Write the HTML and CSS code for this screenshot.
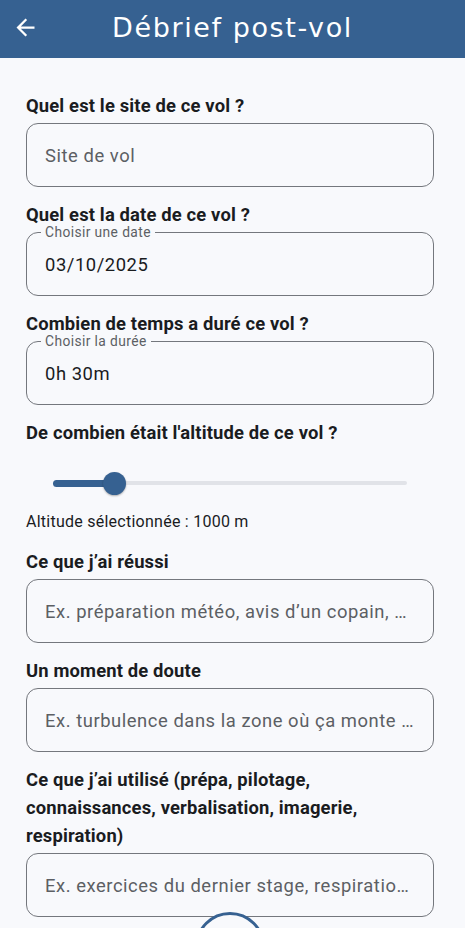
FILE: index.html
```html
<!DOCTYPE html>
<html lang="fr">
<head>
<meta charset="utf-8">
<title>Débrief post-vol</title>
<link rel="stylesheet" href="styles.css">
</head>
<body>
<header class="appbar">
  <button class="back" aria-label="Retour">
    <svg width="27" height="27" viewBox="0 0 24 24"><path d="M20 11H7.83l5.59-5.59L12 4l-8 8 8 8 1.41-1.41L7.83 13H20v-2z" fill="#fff"/></svg>
  </button>
  <h1 class="title">Débrief post-vol</h1>
</header>
<main class="form">
  <section class="group">
    <h2 class="label">Quel est le site de ce vol ?</h2>
    <div class="field"><span class="placeholder">Site de vol</span></div>
  </section>
  <section class="group">
    <h2 class="label">Quel est la date de ce vol ?</h2>
    <div class="field"><span class="float">Choisir une date</span><span class="value">03/10/2025</span></div>
  </section>
  <section class="group">
    <h2 class="label">Combien de temps a duré ce vol ?</h2>
    <div class="field"><span class="float">Choisir la durée</span><span class="value">0h 30m</span></div>
  </section>
  <section class="group">
    <h2 class="label">De combien était l'altitude de ce vol ?</h2>
    <div class="slider">
      <div class="track">
        <div class="active" style="width: 61px"></div>
        <div class="thumb"></div>
        <div class="inactive"></div>
      </div>
    </div>
    <p class="hint">Altitude sélectionnée : 1000 m</p>
  </section>
  <section class="group">
    <h2 class="label">Ce que j’ai réussi</h2>
    <div class="field"><span class="placeholder">Ex. préparation météo, avis d’un copain, …</span></div>
  </section>
  <section class="group">
    <h2 class="label">Un moment de doute</h2>
    <div class="field"><span class="placeholder">Ex. turbulence dans la zone où ça monte …</span></div>
  </section>
  <section class="group">
    <h2 class="label">Ce que j’ai utilisé (prépa, pilotage, connaissances, verbalisation, imagerie, respiration)</h2>
    <div class="field"><span class="placeholder">Ex. exercices du dernier stage, respiratio…</span></div>
  </section>
  <div class="fab" aria-hidden="true"></div>
</main>
</body>
</html>
```
FILE: styles.css
```css
* { box-sizing: border-box; }
html, body { margin: 0; padding: 0; }
body {
  background: #f8f9fc;
  font-family: Roboto, "Liberation Sans", sans-serif;
  color: #1a1c1f;
  width: 465px;
  height: 928px;
  overflow: hidden;
  position: relative;
}
.appbar {
  height: 58px;
  background: #366191;
  display: flex;
  align-items: center;
  position: relative;
}
.back {
  background: none;
  border: 0;
  padding: 0;
  margin-left: 12px;
  width: 27px;
  height: 27px;
  display: flex;
  align-items: center;
  justify-content: center;
  margin-top: -4px;
}
.title {
  flex: 1;
  margin: 0 0 3px 0;
  text-align: center;
  color: #fff;
  font-family: "DejaVu Sans", sans-serif;
  font-weight: 400;
  font-size: 27px;
  letter-spacing: 1.6px;
  padding-right: 39px;
}
.form {
  padding: 34px 31px 0 26px;
  display: flex;
  flex-direction: column;
  gap: 14px;
}
.group { display: flex; flex-direction: column; }
.label {
  margin: 0 0 3px 0;
  font-size: 18.4px;
  font-weight: 700;
  line-height: 28px;
  letter-spacing: 0.15px;
  color: #1a1c1f;
}
.field {
  position: relative;
  height: 64px;
  border: 1.3px solid #74777d;
  border-radius: 12px;
  display: flex;
  align-items: center;
  padding: 0 18px;
  font-size: 18.4px;
  letter-spacing: 0.55px;
}
.placeholder { color: #5c5f64; white-space: nowrap; }
.value { color: #1a1c1f; }
.float {
  position: absolute;
  top: -9px;
  left: 14px;
  padding: 0 4px;
  background: #f8f9fc;
  font-size: 13.8px;
  line-height: 16px;
  color: #5c5f64;
  letter-spacing: 0.4px;
}
.slider {
  height: 58px;
  margin-top: 4px;
  display: flex;
  align-items: center;
  padding: 0 27px;
}
.track {
  flex: 1;
  display: flex;
  align-items: center;
  height: 24px;
}
.active {
  height: 7px;
  background: #366191;
  border-radius: 4px 0 0 4px;
  margin-right: -11px;
}
.thumb {
  width: 23px;
  height: 23px;
  border-radius: 50%;
  background: #366191;
  box-shadow: 0 1px 2px rgba(0,0,0,0.3);
  position: relative;
  z-index: 1;
  flex: none;
}
.inactive {
  flex: 1;
  height: 4px;
  background: #e1e3e8;
  border-radius: 0 2px 2px 0;
  margin-left: -11px;
}
.hint {
  margin: 0 0 2px 0;
  font-size: 16px;
  line-height: 20px;
  letter-spacing: 0.25px;
  color: #1a1c1f;
}
.fab {
  position: absolute;
  left: 195px;
  top: 912px;
  width: 70px;
  height: 70px;
  border-radius: 50%;
  border: 3px solid #366191;
  background: #f8f9fc;
}
```
